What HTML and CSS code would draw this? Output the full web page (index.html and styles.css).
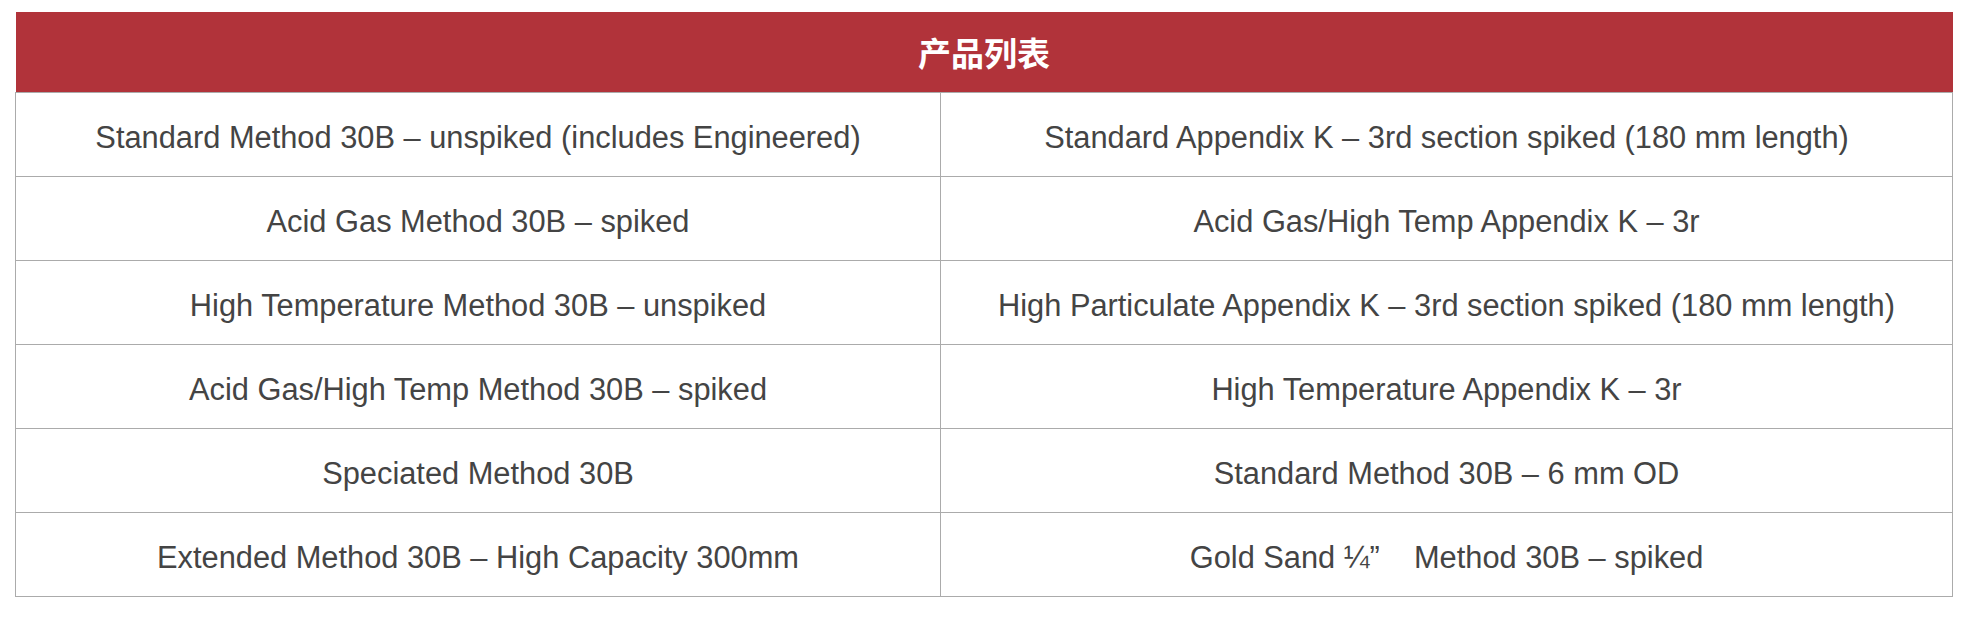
FILE: index.html
```html
<!DOCTYPE html>
<html lang="zh">
<head>
<meta charset="utf-8">
<title>产品列表</title>
<link rel="stylesheet" href="styles.css">
</head>
<body>
<div class="wrap">
  <table class="product-table">
    <colgroup>
      <col class="col-left">
      <col class="col-right">
    </colgroup>
    <thead>
      <tr><th colspan="2">产品列表</th></tr>
    </thead>
    <tbody>
      <tr><td>Standard Method 30B – unspiked (includes Engineered)</td><td>Standard Appendix K – 3rd section spiked (180 mm length)</td></tr>
      <tr><td>Acid Gas Method 30B – spiked</td><td>Acid Gas/High Temp Appendix K – 3r</td></tr>
      <tr><td>High Temperature Method 30B – unspiked</td><td>High Particulate Appendix K – 3rd section spiked (180 mm length)</td></tr>
      <tr><td>Acid Gas/High Temp Method 30B – spiked</td><td>High Temperature Appendix K – 3r</td></tr>
      <tr><td>Speciated Method 30B</td><td>Standard Method 30B – 6 mm OD</td></tr>
      <tr><td>Extended Method 30B – High Capacity 300mm</td><td>Gold Sand ¼”&nbsp;&nbsp;&nbsp; Method 30B – spiked</td></tr>
    </tbody>
  </table>
</div>
</body>
</html>
```

FILE: styles.css
```css
html, body {
  margin: 0;
  padding: 0;
  background: #ffffff;
}

.wrap {
  padding: 12px 0 0 15px;
}

.product-table {
  width: 1937px;
  border-collapse: collapse;
  table-layout: fixed;
  font-family: "Liberation Sans", Arial, "Noto Sans CJK SC", sans-serif;
}

.col-left { width: 925px; }
.col-right { width: 1012px; }

.product-table th {
  height: 80px;
  padding: 0;
  background: #b1333a;
  color: #ffffff;
  font-family: "Noto Sans CJK SC", "Liberation Sans", sans-serif;
  font-size: 33px;
  font-weight: 700;
  text-align: center;
  vertical-align: middle;
  border: none;
}

.product-table td {
  height: 77px;
  padding: 6px 0 0 0;
  border: 1px solid #ababab;
  color: #444444;
  font-size: 30.8px;
  text-align: center;
  vertical-align: middle;
  white-space: nowrap;
}
```
